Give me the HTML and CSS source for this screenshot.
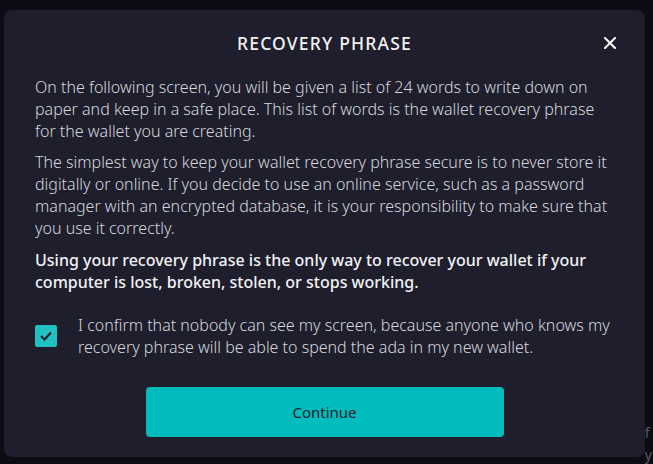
FILE: index.html
```html
<!DOCTYPE html>
<html lang="en">

<head>
    <meta charset="UTF-8">
    <meta name="viewport" content="width=device-width, initial-scale=1.0">
    <title>Recovery phrase</title>
    <link rel="stylesheet" href="styles.css">
</head>

<body>
    <div class="backdrop-text">f<br>y</div>

    <div class="modal">
        <div class="modal-header">
            <h2 class="modal-title">RECOVERY PHRASE</h2>
            <button class="close-btn" aria-label="Close">
                <svg width="12" height="12" viewBox="0 0 12 12">
                    <path d="M1 1 L11 11 M11 1 L1 11" stroke="#fff" stroke-width="2" stroke-linecap="square" />
                </svg>
            </button>
        </div>

        <p>On the following screen, you will be given a list of 24 words to write down on paper and keep in a safe place. This list of words is the wallet recovery phrase for the wallet you are creating.</p>
        <p>The simplest way to keep your wallet recovery phrase secure is to never store it digitally or online. If you decide to use an online service, such as a password manager with an encrypted database, it is your responsibility to make sure that you use it correctly.</p>
        <p class="strong">Using your recovery phrase is the only way to recover your wallet if your computer is lost, broken, stolen, or stops working.</p>

        <label class="confirm">
            <span class="checkbox">
                <svg width="12" height="10" viewBox="0 0 12 10">
                    <path d="M1 5 L4.5 8.5 L11 1.5" fill="none" stroke="#1b1b28" stroke-width="2" />
                </svg>
            </span>
            <span class="confirm-text">I confirm that nobody can see my screen, because anyone who knows my recovery phrase will be able to spend the ada in my new wallet.</span>
        </label>

        <div class="actions">
            <button class="continue-btn">Continue</button>
        </div>
    </div>
</body>

</html>
```

FILE: styles.css
```css
body {
    font-family: "Noto Sans", sans-serif;
    background-color: #0c0c15;
    margin: 0;
    padding: 10px 8px 7px 4px;
    height: 464px;
    box-sizing: border-box;
    overflow: hidden;
    position: relative;
}

.backdrop-text {
    position: absolute;
    right: 1px;
    top: 422px;
    color: #5b5b68;
    font-size: 14px;
    line-height: 22px;
}

.modal {
    position: relative;
    background-color: #1e1e2d;
    border-radius: 8px;
    height: 100%;
    box-sizing: border-box;
    padding: 20px 31px 20px 31px;
    color: #d6d6dc;
}

.modal-header {
    display: flex;
    justify-content: center;
    align-items: center;
    position: relative;
    margin-bottom: 20px;
}

.modal-title {
    margin: 0;
    font-size: 17.5px;
    font-weight: 500;
    letter-spacing: 1.2px;
    color: #f2f2f4;
    line-height: 26px;
}

.close-btn {
    position: absolute;
    right: -2px;
    top: 7px;
    background: none;
    border: none;
    padding: 0;
    cursor: pointer;
    display: flex;
}

p {
    margin: 0 0 9px;
    font-size: 16px;
    font-weight: 300;
    line-height: 22px;
}

p.strong {
    margin-top: 10px;
    font-weight: 500;
    color: #f2f2f4;
}

.confirm {
    display: flex;
    align-items: center;
    gap: 21px;
    margin-top: 21px;
}

.checkbox {
    width: 22px;
    height: 22px;
    flex-shrink: 0;
    border-radius: 2px;
    background-color: #1fc1c3;
    display: flex;
    align-items: center;
    justify-content: center;
}

.confirm-text {
    font-size: 16px;
    font-weight: 300;
    line-height: 22px;
}

.actions {
    display: flex;
    justify-content: center;
    margin-top: 29px;
}

.continue-btn {
    width: 358px;
    height: 50px;
    border: none;
    border-radius: 4px;
    background-color: #00bcbc;
    color: #1b1b28;
    font-family: "Noto Sans", sans-serif;
    font-size: 15px;
    cursor: pointer;
}
```
